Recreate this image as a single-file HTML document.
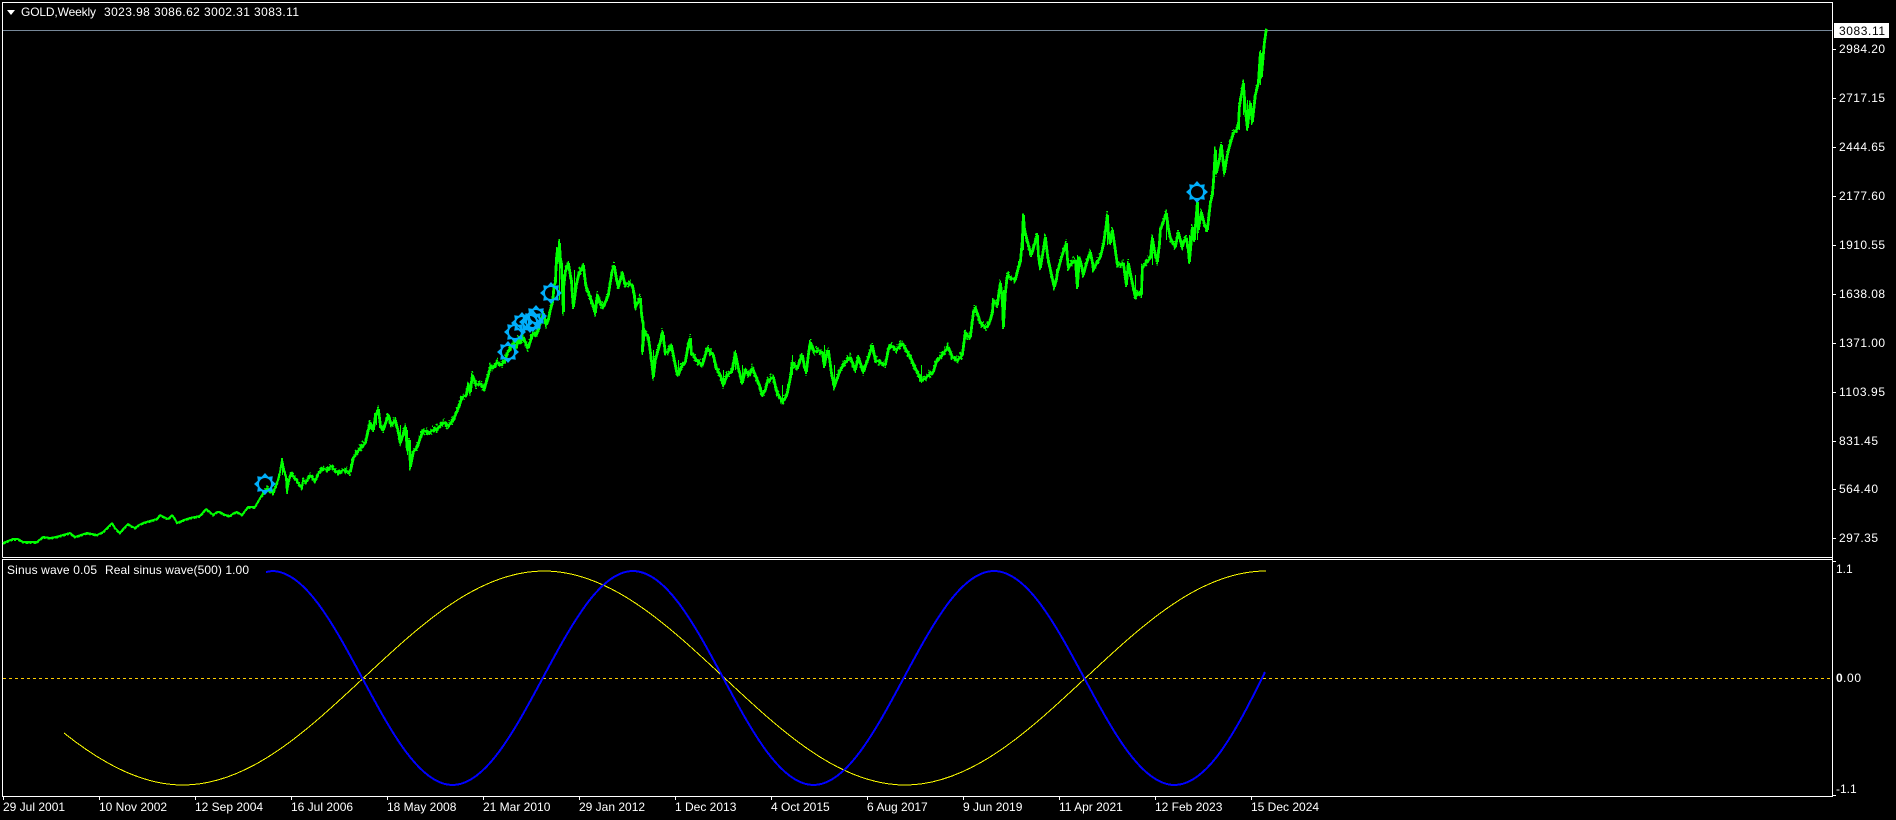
<!DOCTYPE html>
<html lang="en">
<head>
<meta charset="utf-8">
<title>GOLD,Weekly</title>
<style>
html,body{margin:0;padding:0;background:#000;width:1896px;height:820px;overflow:hidden}
svg{display:block}
text{font-family:"Liberation Sans",Arial,sans-serif;font-size:12px;fill:#fff}
</style>
</head>
<body>
<svg width="1896" height="820" viewBox="0 0 1896 820" xmlns="http://www.w3.org/2000/svg">
<defs>
<g id="gear">
<circle cx="0" cy="0" r="7" fill="none" stroke="#00aefa" stroke-width="2"/>
<path fill="#00aefa" d="M-3.5,-7L0,-11L3.5,-7ZM2.5,-7L7.8,-7.8L7,-2.5ZM7,-3.5L11,0L7,3.5ZM7,2.5L7.8,7.8L2.5,7ZM3.5,7L0,11L-3.5,7ZM-2.5,7L-7.8,7.8L-7,2.5ZM-7,3.5L-11,0L-7,-3.5ZM-7,-2.5L-7.8,-7.8L-2.5,-7Z"/>
</g>
<polyline id="price" fill="none" stroke-linejoin="bevel" points="3,543 8,541 13,539 18,539 23,542 30,542 37,542 43,537 50,538 56,537 63,535 70,533 75,537 81,535 87,533 92,534 97,535 103,532 108,527 112,523 115,528 120,533 124,528 128,524 131,526 135,528 139,525 143,523 150,521 157,519 160,515 164,517 168,519 172,515 175,519 177,523 184,520 190,518 195,517 200,516 206,509 210,512 213,515 217,512 220,512 225,515 230,516 234,513 237,512 242,515 248,507 255,507 259,500 262,495 267,488 273,493 276,486 278,480 280,472 282,460 284,470 286,477 287,492 289,480 291,473 295,478 299,484 302,488 303,480 306,482 310,475 315,481 319,472 323,468 327,470 331,466 335,470 338,473 343,470 350,472 353,458 357,452 360,448 365,443 368,430 370,423 373,430 375,417 378,409 380,425 383,430 388,415 391,425 395,420 398,432 400,443 403,434 405,427 407,450 409,440 410,467 413,452 417,447 420,438 423,430 428,433 433,430 438,428 443,422 448,426 453,420 458,408 462,397 466,395 468,385 470,392 472,375 476,385 480,383 484,389 488,375 490,367 493,367 497,362 501,365 505,360 507,353 510,348 513,343 516,348 518,338 520,342 523,337 526,345 528,348 531,338 533,333 536,335 538,330 541,320 543,313 546,325 548,320 550,310 552,303 554,285 555,283 556,260 557,250 558,262 559,243 560,258 561,263 562,285 563,312 563,290 565,272 568,263 570,275 571,280 572,295 573,307 574,300 576,285 579,272 581,270 583,265 585,282 586,287 589,295 592,303 595,313 597,295 600,303 603,307 606,300 608,295 610,282 612,270 613,268 614,266 616,278 618,287 620,280 622,273 624,282 625,285 628,283 632,285 634,295 635,307 638,302 640,298 641,312 642,320 643,323 642,352 644,330 646,335 648,337 650,352 652,368 653,377 655,360 657,353 660,342 662,332 664,345 665,353 667,352 669,350 671,345 674,360 676,370 678,375 681,367 685,362 688,345 690,338 691,353 692,353 696,360 702,365 705,355 707,348 710,352 713,355 716,368 720,375 723,385 727,375 732,370 734,358 735,353 738,368 742,383 745,370 749,375 752,368 755,375 759,385 762,395 765,390 767,382 771,378 773,377 775,386 777,393 780,398 782,402 785,398 787,393 790,378 792,362 795,366 797,368 800,360 802,355 804,366 806,372 808,355 810,342 814,352 818,350 822,352 824,366 826,355 828,350 831,372 834,387 837,378 840,370 845,362 850,357 853,365 855,370 858,357 861,366 863,372 868,358 872,345 875,360 880,362 885,365 888,350 890,345 896,350 902,343 906,350 910,357 915,368 921,380 925,378 928,375 933,372 936,362 940,357 944,352 948,347 952,357 957,360 962,355 965,332 968,337 970,337 973,313 975,308 978,316 980,323 984,326 987,327 990,320 992,313 993,300 995,303 997,305 1000,283 1002,300 1003,327 1004,310 1005,293 1007,275 1011,278 1015,280 1018,268 1020,262 1022,240 1023,215 1024,228 1025,233 1028,245 1031,255 1034,245 1037,235 1038,255 1040,268 1043,250 1045,237 1047,254 1048,260 1051,274 1054,287 1056,280 1057,273 1061,258 1066,243 1067,258 1068,268 1072,262 1075,260 1077,287 1079,258 1081,265 1083,275 1086,264 1090,252 1092,262 1093,270 1097,262 1100,257 1103,245 1105,232 1107,215 1108,232 1110,243 1112,230 1115,250 1117,265 1120,264 1123,263 1126,285 1128,263 1131,278 1135,297 1138,292 1141,295 1142,268 1146,262 1150,258 1152,238 1154,250 1157,262 1159,245 1160,230 1163,222 1166,213 1168,228 1170,238 1173,243 1175,247 1178,232 1180,240 1182,247 1184,240 1186,238 1188,250 1189,262 1191,240 1192,227 1194,240 1197,202 1198,230 1200,218 1201,212 1204,224 1207,230 1210,203 1212,195 1213,183 1215,150 1216,173 1219,160 1221,145 1224,173 1227,155 1229,147 1233,133 1236,130 1238,127 1239,107 1241,95 1243,83 1245,110 1247,128 1250,103 1252,122 1255,95 1258,83 1260,53 1261,77 1264,43 1266,29"/>
<clipPath id="z1"><rect x="0" y="0" width="1270" height="557"/></clipPath>
<clipPath id="z2"><rect x="262" y="0" width="1008" height="557"/></clipPath>
<clipPath id="z3"><rect x="345" y="0" width="925" height="557"/></clipPath>
</defs>
<rect width="1896" height="820" fill="#000"/>

<g shape-rendering="crispEdges">
<line x1="3" y1="30.5" x2="1832" y2="30.5" stroke="#778899"/>
<line x1="3" y1="678.5" x2="1832" y2="678.5" stroke="#ffcc00" stroke-dasharray="3 3"/>
<path fill="none" stroke="#fff" d="M2.5,557.5V2.5H1832.5V796.5H2.5V559.5H1832.5M2.5,557.5H1832.5"/>
<path fill="none" stroke="#fff" d="M1833,49.5h3M1833,98.5h3M1833,147.5h3M1833,196.5h3M1833,245.5h3M1833,294.5h3M1833,343.5h3M1833,392.5h3M1833,441.5h3M1833,489.5h3M1833,538.5h3M1833,561.5h3M1833,795.5h3"/>
<path fill="none" stroke="#fff" d="M3.5,797v3M99.5,797v3M195.5,797v3M291.5,797v3M387.5,797v3M483.5,797v3M579.5,797v3M675.5,797v3M771.5,797v3M867.5,797v3M963.5,797v3M1059.5,797v3M1155.5,797v3M1251.5,797v3"/>
<rect x="1834" y="23" width="55" height="15" fill="#fff"/>
</g>

<g shape-rendering="crispEdges" stroke="#00ff00">
<g clip-path="url(#z1)">
<use href="#price" stroke-width="2"/>
<use href="#price" transform="translate(0,1)" stroke-width="1.5" stroke-dasharray="3 1 2 2"/>
</g>
<g clip-path="url(#z2)">
<use href="#price" transform="translate(0,2)" stroke-width="1.5" stroke-dasharray="2 1 3 2"/>
<use href="#price" transform="translate(0,-2)" stroke-width="1.5" stroke-dasharray="3 2 1 2"/>
</g>
<g clip-path="url(#z3)">
<use href="#price" transform="translate(1,0)" stroke-width="1.5"/>
<use href="#price" transform="translate(0,3.5)" stroke-width="1.5" stroke-dasharray="1 4 2 7"/>
<use href="#price" transform="translate(0,-4)" stroke-width="1.5" stroke-dasharray="1 6 1 3 2 9"/>
</g>
<path fill="none" stroke-width="1" d="M282.5,458V475M287.5,478V493M376.5,410V425M400.5,425V445M407.5,430V455M410.5,445V468M559.5,243V300M574.5,270V305M642.5,320V352M653.5,350V378M664.5,335V350M678.5,360V375M723.5,370V385M735.5,350V370M742.5,365V383M782.5,385V402M792.5,355V375M824.5,345V366M834.5,365V387M921.5,365V383M1003.5,290V327M1023.5,215V250M1077.5,255V287M1107.5,215V245M1135.5,275V299M1141.5,270V298M1152.5,235V265M1166.5,213V240M1189.5,235V262M1197.5,202V240M1239.5,100V130M1243.5,83V115M1247.5,100V130M1260.5,50V85"/>
</g>

<g fill="none" shape-rendering="crispEdges">
<path stroke="#ffff00" stroke-width="1" d="M64,733C103.7,764.7 143.3,785 183,785C314.5,785 412.5,571 544,571C675.5,571 773.5,785 905,785C1036.5,785 1134.5,571 1266,571"/>
<path stroke="#0000ff" stroke-width="2" d="M266,572L272,571C337.7,571 386.8,785 452.5,785C518.2,785 567.3,571 633,571C698.7,571 747.8,785 813.5,785C879.2,785 928.3,571 994,571C1059.7,571 1108.8,785 1174.5,785C1207.2,785 1235.3,732.8 1265,672"/>
</g>

<use href="#gear" x="265" y="484"/>
<use href="#gear" x="508" y="352"/>
<use href="#gear" x="515" y="332"/>
<use href="#gear" x="522" y="323"/>
<use href="#gear" x="530" y="322"/>
<use href="#gear" x="533" y="321"/>
<use href="#gear" x="536" y="316"/>
<use href="#gear" x="551" y="293"/>
<use href="#gear" x="1197" y="192"/>

<path fill="#fff" d="M7,10H15L11,15Z"/>
<text x="21" y="16" textLength="75">GOLD,Weekly</text>
<text x="104" y="16" textLength="195">3023.98 3086.62 3002.31 3083.11</text>

<text x="1839" y="35" textLength="46" style="fill:#000">3083.11</text>
<text x="1839" y="53" textLength="46">2984.20</text>
<text x="1839" y="102" textLength="46">2717.15</text>
<text x="1839" y="151" textLength="46">2444.65</text>
<text x="1839" y="200" textLength="46">2177.60</text>
<text x="1839" y="249" textLength="46">1910.55</text>
<text x="1839" y="298" textLength="46">1638.08</text>
<text x="1839" y="347" textLength="46">1371.00</text>
<text x="1839" y="396" textLength="46">1103.95</text>
<text x="1839" y="445" textLength="39">831.45</text>
<text x="1839" y="493" textLength="39">564.40</text>
<text x="1839" y="542" textLength="39">297.35</text>

<text x="7" y="574" textLength="90">Sinus wave 0.05</text>
<text x="105" y="574" textLength="144">Real sinus wave(500) 1.00</text>
<text x="1836" y="573">1.1</text>
<text x="1836" y="682" font-weight="bold" textLength="7">0</text>
<text x="1843" y="682" textLength="18">.00</text>
<text x="1836" y="793">-1.1</text>

<text x="3" y="811">29 Jul 2001</text>
<text x="99" y="811">10 Nov 2002</text>
<text x="195" y="811">12 Sep 2004</text>
<text x="291" y="811">16 Jul 2006</text>
<text x="387" y="811">18 May 2008</text>
<text x="483" y="811">21 Mar 2010</text>
<text x="579" y="811">29 Jan 2012</text>
<text x="675" y="811">1 Dec 2013</text>
<text x="771" y="811">4 Oct 2015</text>
<text x="867" y="811">6 Aug 2017</text>
<text x="963" y="811">9 Jun 2019</text>
<text x="1059" y="811">11 Apr 2021</text>
<text x="1155" y="811">12 Feb 2023</text>
<text x="1251" y="811">15 Dec 2024</text>
</svg>
</body>
</html>
